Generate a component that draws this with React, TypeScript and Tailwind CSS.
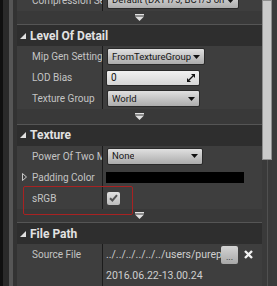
import type { ReactNode } from 'react';

const Caret = () => (
  <svg width="7" height="4" viewBox="0 0 7 4" className="shrink-0">
    <path d="M0 0h7L3.5 4z" fill="#111" />
  </svg>
);

function Expander({ h = 'h-[14px]' }: { h?: string }) {
  return (
    <div className={`flex ${h} items-center justify-center bg-[#393939]`}>
      <svg width="9" height="7" viewBox="0 0 9 7">
        <rect x="0" y="0" width="9" height="1.5" fill="#e0e0e0" />
        <path d="M0 2.5h9L4.5 7z" fill="#e0e0e0" />
      </svg>
    </div>
  );
}

function Header({ title }: { title: string }) {
  return (
    <div className="flex h-[23px] items-center gap-[4px] border-t border-[#555] bg-[#2e2e2e] pl-[3px] text-[12px] font-bold text-[#e2e2e2]">
      <svg width="6" height="6" viewBox="0 0 6 6">
        <path d="M6 0v6H0z" fill="#e0e0e0" />
      </svg>
      <span>{title}</span>
    </div>
  );
}

function Row({ label, children, expand, extra }: { label: string; children?: ReactNode; expand?: boolean; extra?: ReactNode }) {
  return (
    <div className="relative flex h-[22px] items-center bg-[#3e3e3e]">
      {extra}
      <div className={`flex h-full w-[85px] shrink-0 items-center overflow-hidden whitespace-nowrap text-[10px] text-[#c4c4c4] ${expand ? 'gap-[5px] pl-[5px]' : 'pl-[15px]'}`}>
        {expand && (
          <svg width="5" height="8" viewBox="0 0 5 8" className="shrink-0">
            <path d="M0.5 0.5L4.5 4L0.5 7.5z" fill="none" stroke="#c8c8c8" strokeWidth="1" />
          </svg>
        )}
        {label}
      </div>
      <div className="flex h-full min-w-0 flex-1 items-center border-l border-[#1c1c1c] pl-[3px]">{children}</div>
    </div>
  );
}

function Combo({ text, w, tight }: { text: string; w: string; tight?: boolean }) {
  return (
    <div className={`ml-[1px] flex h-[17px] ${w} shrink-0 items-center ${tight ? 'gap-[2px]' : 'justify-between'} whitespace-nowrap rounded-[2px] border border-[#2a2a2a] bg-linear-to-b from-[#e0e0e0] to-[#acacac] pl-[4px] pr-[4px] text-[9.5px] text-[#161616]`}>
      <span className="min-w-0 overflow-hidden">{text}</span>
      <Caret />
    </div>
  );
}

export default function App() {
  return (
    <div className="flex h-[286px] w-[277px] overflow-hidden bg-[#3e3e3e]" style={{ fontFamily: 'Roboto, "Noto Sans", sans-serif' }}>
      <div className="w-[3px] bg-[#101010]" />
      <div className="w-[6px] bg-[#2a2a2a]" />
      <div className="w-[4px] bg-[#565656]" />
      <div className="w-[4px] bg-[#333]" />

      <div className="-mt-[10px] flex w-[245px] flex-col">
        <Row label="Compression Settings">
          <Combo text="Default (DXT1/5, BC1/3 on DX11)" w="w-[132px]" tight />
        </Row>
        <Expander />
        <Header title="Level Of Detail" />
        <Row label="Mip Gen Settings">
          <Combo text="FromTextureGroup" w="w-fit" tight />
        </Row>
        <Row label="LOD Bias">
          <div className="flex h-[16px] w-[94px] items-center justify-between rounded-[2px] border border-[#2a2a2a] bg-linear-to-b from-[#f0f0f0] to-[#d6d6d6] pl-[4px] pr-[4px] text-[10px] text-[#111]">
            <span>0</span>
            <svg width="8" height="8" viewBox="0 0 8 8">
              <path d="M8 0v4L4 0z" fill="#111" />
              <path d="M0 8V4l4 4z" fill="#111" />
              <path d="M2 6L6 2" stroke="#111" strokeWidth="1.2" />
            </svg>
          </div>
        </Row>
        <Row label="Texture Group">
          <Combo text="World" w="w-[93px]" />
        </Row>
        <Expander h="h-[15px]" />
        <Header title="Texture" />
        <Row label="Power Of Two Mode">
          <Combo text="None" w="w-[96px]" />
        </Row>
        <Row label="Padding Color" expand>
          <div className="h-[11px] w-[138px] bg-black" />
        </Row>
        <Row
          label="sRGB"
          extra={<div className="pointer-events-none absolute -top-[2px] left-[6px] h-[29px] w-[110px] rounded-[2px] border-[1.5px] border-[#a82222]" />}
        >
          <div className="ml-[1px] flex h-[13px] w-[13px] items-center justify-center rounded-[2px] bg-linear-to-b from-[#e2e2e2] to-[#bdbdbd]">
            <svg width="9" height="8" viewBox="0 0 9 8">
              <path d="M1 4.2L3.4 6.5L8 1.2" fill="none" stroke="#555" strokeWidth="2" />
            </svg>
          </div>
        </Row>
        <Expander />
        <Header title="File Path" />
        <Row label="Source File">
          <div className="flex items-center">
            <div className="w-[115px] overflow-hidden whitespace-nowrap text-[10.5px] text-[#cfcfcf]">../../../../../../users/purepixel/desktop/tex.png</div>
            <div className="flex h-[18px] w-[17px] items-end justify-center rounded-[2px] bg-linear-to-b from-[#d4d4d4] to-[#a8a8a8] pb-[2px] text-[9px] leading-none text-[#222]">...</div>
            <svg width="9" height="9" viewBox="0 0 9 9" className="ml-[6px]">
              <path d="M1 1L8 8M8 1L1 8" stroke="#f2f2f2" strokeWidth="2.4" />
            </svg>
          </div>
        </Row>
        <Row label="">
          <span className="whitespace-nowrap text-[10.5px] text-[#cfcfcf]">2016.06.22-13.00.24</span>
        </Row>
      </div>

      <div className="flex w-[10px] flex-col">
        <div className="h-[160px] border border-[#8e8e8e] bg-[#cacaca]" />
        <div className="flex flex-1 justify-center bg-[#3a3a3a]">
          <div className="w-px bg-[#505050]" />
        </div>
      </div>
      <div className="w-[5px] bg-[#3b3b3b]" />
    </div>
  );
}
